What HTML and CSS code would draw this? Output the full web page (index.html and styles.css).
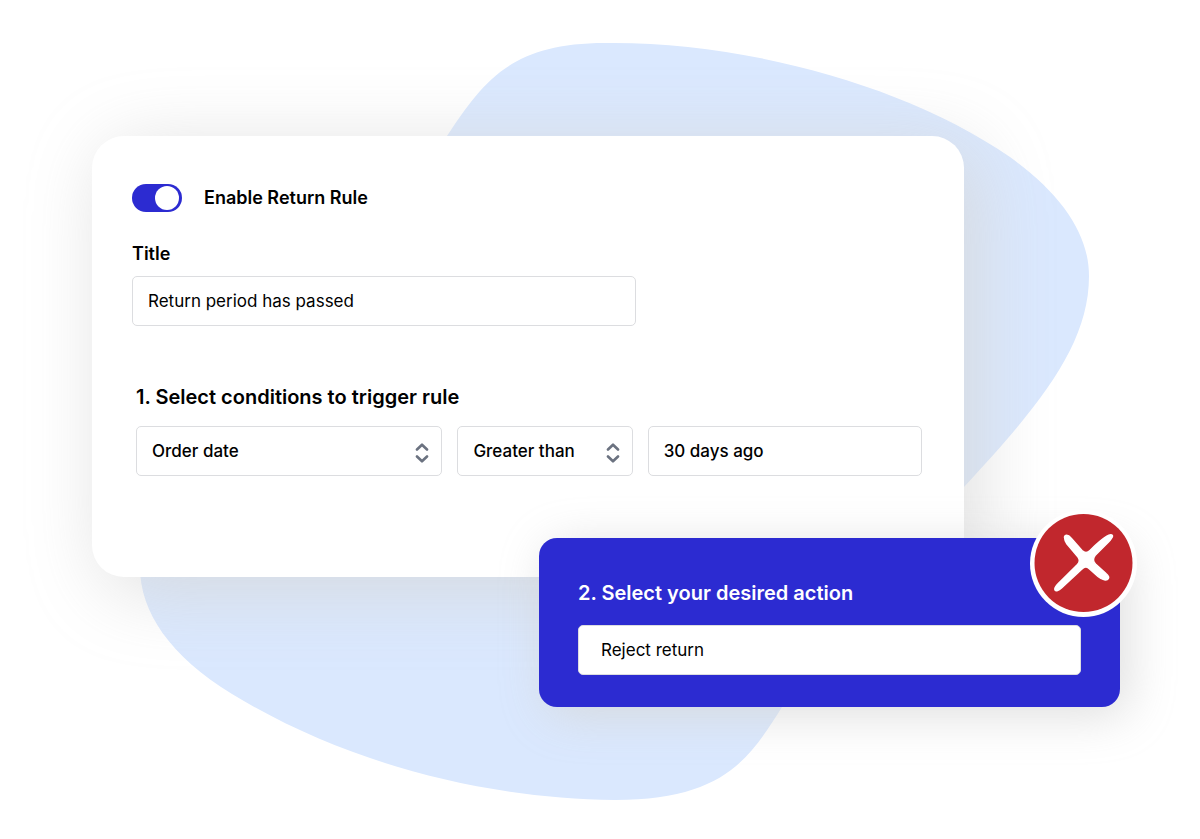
FILE: index.html
```html
<!DOCTYPE html>
<html lang="en">
<head>
    <meta charset="UTF-8">
    <meta name="viewport" content="width=device-width, initial-scale=1">
    <title>Return Rule</title>
    <link rel="stylesheet" href="styles.css">
</head>
<body>
<main class="scene">
    <!-- Background shape -->
    <svg class="blob" viewBox="0 0 1200 839" aria-hidden="true">
        <path fill="#dae8fe" d="M605 43 C740 41 905 84 1010 157 C1063 195 1089 235 1089 276 C1089 345 1040 405 964 487 C875 580 815 655 782 707 C750 758 724 800 615 800 C470 798 335 757 232 694 C170 656 140 612 140 567 C140 480 330 330 447 136 C483 82 510 43 605 43 Z"/>
    </svg>

    <form class="rule">
        <section class="card">
            <div class="enable">
                <input class="toggle" id="enable" type="checkbox" role="switch" checked>
                <label class="label" for="enable">Enable Return Rule</label>
            </div>

            <div class="title">
                <label class="label" for="title">Title</label>
                <input class="field field-title" id="title" type="text" value="Return period has passed">
            </div>

            <div class="conditions">
                <h2 class="heading">1. Select conditions to trigger rule</h2>
                <div class="condition-row">
                    <div class="select">
                        <select class="field" aria-label="Condition">
                            <option>Order date</option>
                        </select>
                        <svg class="arrows" viewBox="0 0 14 20" aria-hidden="true">
                            <path d="M2 6.5 L7 1.7 L12 6.5 M2 13.5 L7 18.3 L12 13.5"/>
                        </svg>
                    </div>
                    <div class="select">
                        <select class="field" aria-label="Comparison">
                            <option>Greater than</option>
                        </select>
                        <svg class="arrows" viewBox="0 0 14 20" aria-hidden="true">
                            <path d="M2 6.5 L7 1.7 L12 6.5 M2 13.5 L7 18.3 L12 13.5"/>
                        </svg>
                    </div>
                    <input class="field" type="text" aria-label="Value" value="30 days ago">
                </div>
            </div>
        </section>

        <section class="action">
            <label class="heading" for="action">2. Select your desired action</label>
            <input class="field field-action" id="action" type="text" value="Reject return">

            <!-- Reject badge -->
            <svg class="badge" viewBox="0 0 107 107" aria-hidden="true">
                <circle cx="53.5" cy="53.5" r="53.5" fill="#fff"/>
                <circle cx="53.5" cy="53" r="49" fill="#c1272d"/>
                <path fill="#fff" stroke="#fff" stroke-width="1.5" stroke-linejoin="round" d="M34.5 27.3 C34.5 24.8 38 24.3 41 28 L52 40.5 C54.500 43 57.500 43 60 40.500 C66 34.500 71 30 76.500 26.500 C80 24.200 82.500 24.500 82.500 26 C82.500 27.500 81 29.300 78.500 32 L65 45.500 C62.800 48.500 62.600 51 65.500 54 L76 63.500 C78.500 65.500 79 67.500 78.300 68.700 C77 70.800 72.500 70.300 68 66.500 L59 58.500 C56.500 56.300 54.500 56.300 52 59 L31.500 78 C28.500 80.700 26 81.300 25 80 C24.200 78.500 25.500 76.300 28.300 73.500 L47.500 54.500 C49.800 52 49.900 49.500 48 47 L37 34 C35 31 34.500 29.300 34.500 27.300 Z"/>
            </svg>
        </section>
    </form>
</main>
</body>
</html>
```
FILE: styles.css
```css
* {
    box-sizing: border-box;
}

body {
    margin: 0;
    font-family: Inter, sans-serif;
    color: #000;
    background-color: #fff;
}

.scene {
    position: relative;
    max-width: 1200px;
    margin: 0 auto;
    padding: 136px 80px 132px 92px;
}

.blob {
    position: absolute;
    top: 0;
    left: 0;
    width: 100%;
}

.rule {
    position: relative;
}

.card {
    margin-right: 156px;
    padding: 48px 42px 101px 40px;
    border-radius: 32px;
    background-color: #fff;
    box-shadow: 12px 12px 78px rgba(214, 214, 214, 0.8);
}

.enable {
    display: flex;
    align-items: center;
    gap: 22px;
    height: 28px;
}

.label {
    font-size: 18px;
    font-weight: 600;
    line-height: 24px;
}

/* Toggle switch */
.toggle {
    appearance: none;
    display: flex;
    align-items: center;
    justify-content: flex-end;
    width: 50px;
    height: 28px;
    margin: 0;
    padding: 0 3px;
    border-radius: 14px;
    background-color: #2c2bd1;
    cursor: pointer;
}

.toggle::before {
    content: '';
    width: 24px;
    height: 24px;
    border-radius: 50%;
    background-color: #fff;
}

.toggle:not(:checked) {
    justify-content: flex-start;
    background-color: #9ca3af;
}

.title {
    display: flex;
    flex-direction: column;
    gap: 10px;
    margin-top: 30px;
}

.field {
    width: 100%;
    height: 50px;
    padding: 0 15px;
    border: 1px solid #dcdde0;
    border-radius: 5px;
    font-family: inherit;
    font-size: 17px;
    font-weight: 500;
    color: #000;
    background-color: #fff;
}

.field-title {
    max-width: 504px;
    font-weight: 400;
}

.conditions {
    margin-top: 58px;
    padding-left: 4px;
}

.heading {
    display: block;
    margin: 0;
    font-size: 20px;
    font-weight: 600;
    line-height: 26px;
}

.condition-row {
    display: grid;
    grid-template-columns: 306fr 175fr 274fr;
    gap: 15px;
    margin-top: 16px;
}

.select {
    position: relative;
}

.select .field {
    appearance: none;
}

.arrows {
    position: absolute;
    top: 17px;
    right: 13px;
    width: 14px;
    height: 20px;
    fill: none;
    stroke: #6b7280;
    stroke-width: 2.6;
    stroke-linecap: round;
    stroke-linejoin: round;
    pointer-events: none;
}

/* Action panel overlaps the bottom of the card */
.action {
    position: relative;
    max-width: 581px;
    margin: -39px 0 0 auto;
    padding: 42px 39px 32px;
    border-radius: 18px;
    color: #fff;
    background-color: #2c2bd1;
    box-shadow: 8px 8px 48px rgba(214, 214, 214, 0.8);
}

.field-action {
    margin-top: 19px;
    padding: 0 22px;
    font-size: 17px;
    font-weight: 400;
}

.badge {
    position: absolute;
    top: -28px;
    right: -17px;
    width: 107px;
    height: 107px;
}
```
